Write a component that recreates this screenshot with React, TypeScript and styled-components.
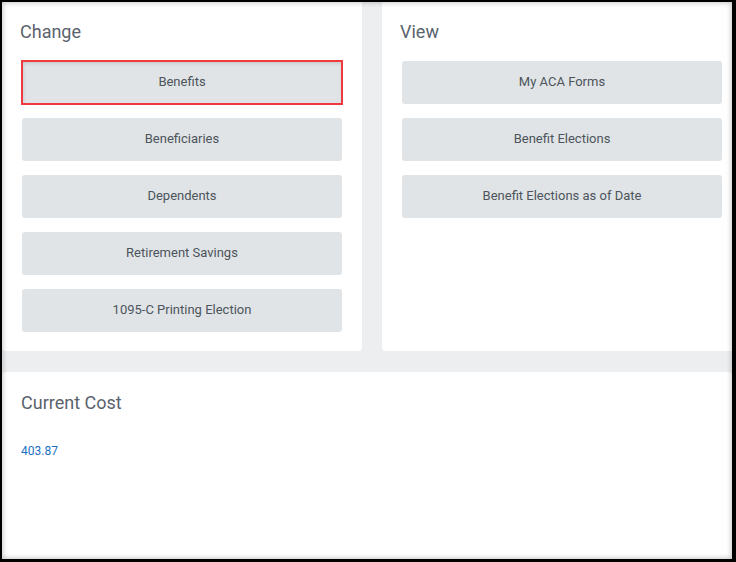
import React from 'react';
import styled, { createGlobalStyle } from 'styled-components';

const GlobalStyle = createGlobalStyle`
  html, body {
    margin: 0;
    padding: 0;
    background: #ffffff;
  }
  body {
    font-family: Roboto, "Liberation Sans", Arial, sans-serif;
  }
`;

const Frame = styled.div`
  position: relative;
  width: 736px;
  height: 562px;
  box-sizing: border-box;
  border-style: solid;
  border-color: #000;
  border-width: 2px 4px 3px 2px;
  background: #edeef0;
  overflow: hidden;
  display: flex;
  flex-direction: column;
  gap: 21px;

  /* soft inner vignette of the screenshot */
  &::after {
    content: '';
    position: absolute;
    inset: 0;
    pointer-events: none;
    box-shadow: inset 0 0 5px 1px rgba(0, 0, 0, 0.22);
  }
`;

const TopRow = styled.div`
  display: grid;
  grid-template-columns: 360px 360px;
  column-gap: 20px;
  height: 349px;
  flex-shrink: 0;
`;

const Panel = styled.section`
  background: #fff;
  border-radius: 0 0 4px 4px;
  padding: 18px 20px 19px;
  box-sizing: border-box;
  display: flex;
  flex-direction: column;
`;

const CostPanel = styled.section`
  flex: 1;
  background: #fff;
  border-radius: 4px 4px 0 0;
  padding: 19px 19px;
  display: flex;
  flex-direction: column;
`;

const Heading = styled.h2<{ $inset?: number }>`
  margin: 0 0 0 ${({ $inset = 0 }) => $inset}px;
  font-size: 18px;
  line-height: 24px;
  font-weight: 400;
  color: #5a636d;
`;

const ButtonList = styled.div`
  display: flex;
  flex-direction: column;
  gap: 14px;
  margin-top: 17px;
`;

const ActionButton = styled.button<{ $highlighted?: boolean }>`
  height: 43px;
  width: 320px;
  border: none;
  border-radius: 3px;
  background: #e0e4e7;
  color: #4d545b;
  font-family: Roboto, "Liberation Sans", Arial, sans-serif;
  font-size: 13px;
  cursor: pointer;
  padding: 0 0 2px;
  ${({ $highlighted }) =>
    $highlighted &&
    `
    border-radius: 0;
    outline: 2px solid #ef3b3f;
    outline-offset: -1px;
    box-shadow: inset 1px 2px 4px rgba(0, 0, 0, 0.14);
  `}
`;

const CostLink = styled.a`
  margin-top: 28px;
  font-size: 12px;
  line-height: 16px;
  color: #1a6fc4;
  text-decoration: none;
`;

const changeActions = ['Benefits', 'Beneficiaries', 'Dependents', 'Retirement Savings', '1095-C Printing Election'];
const viewActions = ['My ACA Forms', 'Benefit Elections', 'Benefit Elections as of Date'];

const App: React.FC = () => {
  return (
    <>
      <GlobalStyle />
      <Frame>
        <TopRow>
          <Panel>
            <Heading $inset={-2}>Change</Heading>
            <ButtonList>
              {changeActions.map((label) => (
                <ActionButton key={label} $highlighted={label === 'Benefits'}>
                  {label}
                </ActionButton>
              ))}
            </ButtonList>
          </Panel>
          <Panel>
            <Heading $inset={-2}>View</Heading>
            <ButtonList>
              {viewActions.map((label) => (
                <ActionButton key={label}>{label}</ActionButton>
              ))}
            </ButtonList>
          </Panel>
        </TopRow>
        <CostPanel>
          <Heading>Current Cost</Heading>
          <CostLink href="#">403.87</CostLink>
        </CostPanel>
      </Frame>
    </>
  );
};

export default App;
